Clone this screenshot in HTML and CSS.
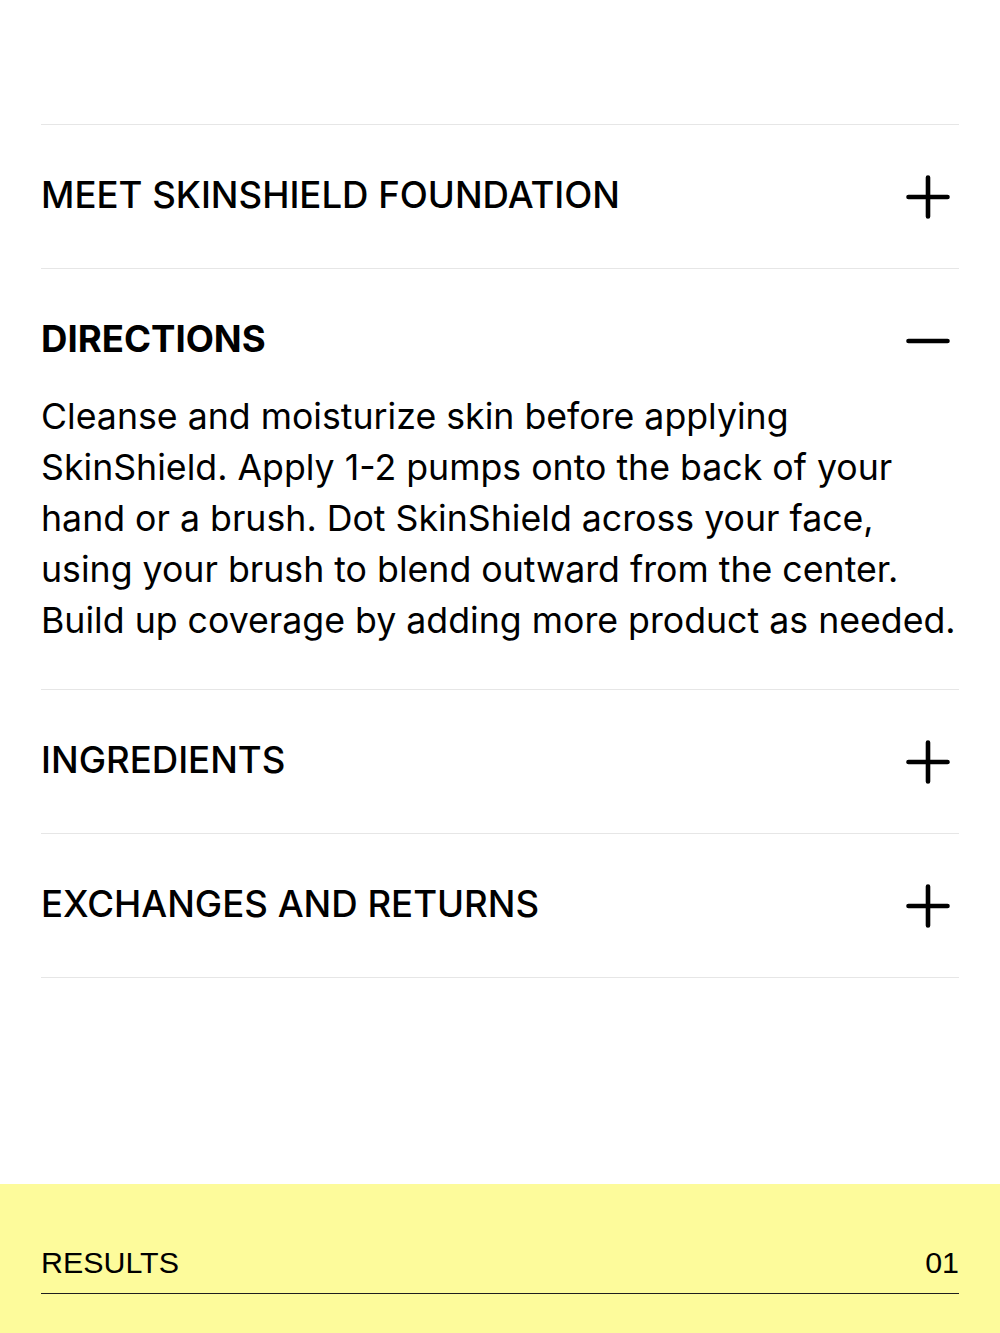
FILE: index.html
```html
<!DOCTYPE html>
<html lang="en">
<head>
<meta charset="utf-8">
<title>SkinShield</title>
<link rel="stylesheet" href="styles.css">
</head>
<body>
<main class="page">
  <section class="accordion">
    <div class="item">
      <div class="item-head">
        <h2 class="item-title">MEET SKINSHIELD FOUNDATION</h2>
        <svg class="icon" viewBox="0 0 44 44"><path d="M22 2.5v39M2.5 22h39"/></svg>
      </div>
    </div>
    <div class="item open">
      <div class="item-head">
        <h2 class="item-title bold">DIRECTIONS</h2>
        <svg class="icon" viewBox="0 0 44 44"><path d="M2.5 22h39"/></svg>
      </div>
      <p class="item-body">Cleanse and moisturize skin before applying SkinShield. Apply 1-2 pumps onto the back of your hand or a brush. Dot SkinShield across your face, using your brush to blend outward from the center. Build up coverage by adding more product as needed.</p>
    </div>
    <div class="item">
      <div class="item-head">
        <h2 class="item-title">INGREDIENTS</h2>
        <svg class="icon" viewBox="0 0 44 44"><path d="M22 2.5v39M2.5 22h39"/></svg>
      </div>
    </div>
    <div class="item">
      <div class="item-head">
        <h2 class="item-title">EXCHANGES AND RETURNS</h2>
        <svg class="icon" viewBox="0 0 44 44"><path d="M22 2.5v39M2.5 22h39"/></svg>
      </div>
    </div>
  </section>
  <section class="results">
    <div class="results-row">
      <span>RESULTS</span>
      <span>01</span>
    </div>
  </section>
</main>
</body>
</html>
```

FILE: styles.css
```css
* { box-sizing: border-box; }
html, body { margin: 0; padding: 0; background: #fff; }
body { font-family: Inter, "Noto Sans", sans-serif; color: #000; }
.page { display: flex; flex-direction: column; min-height: 1333px; }
.accordion { padding: 124px 41px 0; flex: 1; }
.item { border-top: 1px solid #e6e6e6; }
.item:last-child { border-bottom: 1px solid #e6e6e6; }
.item-head {
  display: flex;
  align-items: flex-start;
  justify-content: space-between;
  height: 143px;
  padding: 46px 0 49px;
}
.item.open .item-head { height: 122px; padding-bottom: 28px; }
.item-title {
  margin: 0;
  font-size: 36.6px;
  line-height: 48px;
  font-weight: 500;
  letter-spacing: 0;
}
.item-title.bold { font-weight: 700; }
.icon {
  width: 44px; height: 44px;
  flex: none;
  margin: 4px 9px 0 0;
  fill: none; stroke: #000; stroke-width: 4.6; stroke-linecap: round;
}
.item-body {
  margin: 0;
  padding-bottom: 43px;
  font-size: 35.7px;
  line-height: 51px;
  font-weight: 400;
}
.results {
  background: #fdfb9b;
  height: 149px;
  padding: 58px 41px 0;
}
.results-row {
  display: flex;
  justify-content: space-between;
  align-items: center;
  font-family: "Liberation Sans", Arial, sans-serif;
  font-size: 30.4px;
  line-height: 40px;
  padding-bottom: 11px;
  border-bottom: 1.5px solid #1e1e1e;
}
```
